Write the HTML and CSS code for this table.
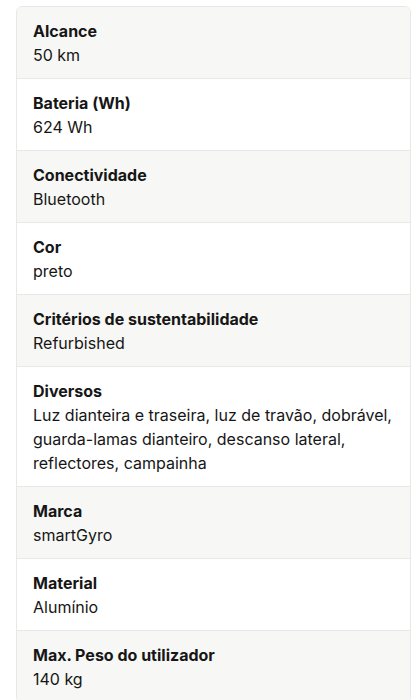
FILE: index.html
```html
<!DOCTYPE html>
<html lang="pt">
<head>
<meta charset="utf-8">
<link rel="stylesheet" href="styles.css">
</head>
<body>
<dl class="specs">
  <div class="row"><dt>Alcance</dt><dd>50 km</dd></div>
  <div class="row"><dt>Bateria (Wh)</dt><dd>624 Wh</dd></div>
  <div class="row"><dt>Conectividade</dt><dd>Bluetooth</dd></div>
  <div class="row"><dt>Cor</dt><dd>preto</dd></div>
  <div class="row"><dt>Critérios de sustentabilidade</dt><dd>Refurbished</dd></div>
  <div class="row"><dt>Diversos</dt><dd>Luz dianteira e traseira, luz de travão, dobrável, guarda-lamas dianteiro, descanso lateral, reflectores, campainha</dd></div>
  <div class="row"><dt>Marca</dt><dd>smartGyro</dd></div>
  <div class="row"><dt>Material</dt><dd>Alumínio</dd></div>
  <div class="row"><dt>Max. Peso do utilizador</dt><dd>140 kg</dd></div>
</dl>
</body>
</html>
```
FILE: styles.css
```css
html, body {
  margin: 0;
  padding: 0;
  background: #ffffff;
}
body {
  font-family: Inter, "Noto Sans", sans-serif;
  color: #161616;
  overflow: hidden;
}
.specs {
  margin: 6px 0 0 16px;
  width: 395px;
  box-sizing: border-box;
  border: 1px solid #e8e8e6;
  border-radius: 6px;
  overflow: hidden;
}
.row {
  padding: 12px 16px 11px;
  border-top: 1px solid #e8e8e6;
  background: #ffffff;
}
.row:first-child {
  border-top: none;
}
.row:nth-child(odd) {
  background: #f7f7f5;
}
dt {
  font-weight: 700;
  font-size: 16px;
  line-height: 24px;
}
dd {
  margin: 0;
  font-size: 16px;
  line-height: 24px;
}
```
